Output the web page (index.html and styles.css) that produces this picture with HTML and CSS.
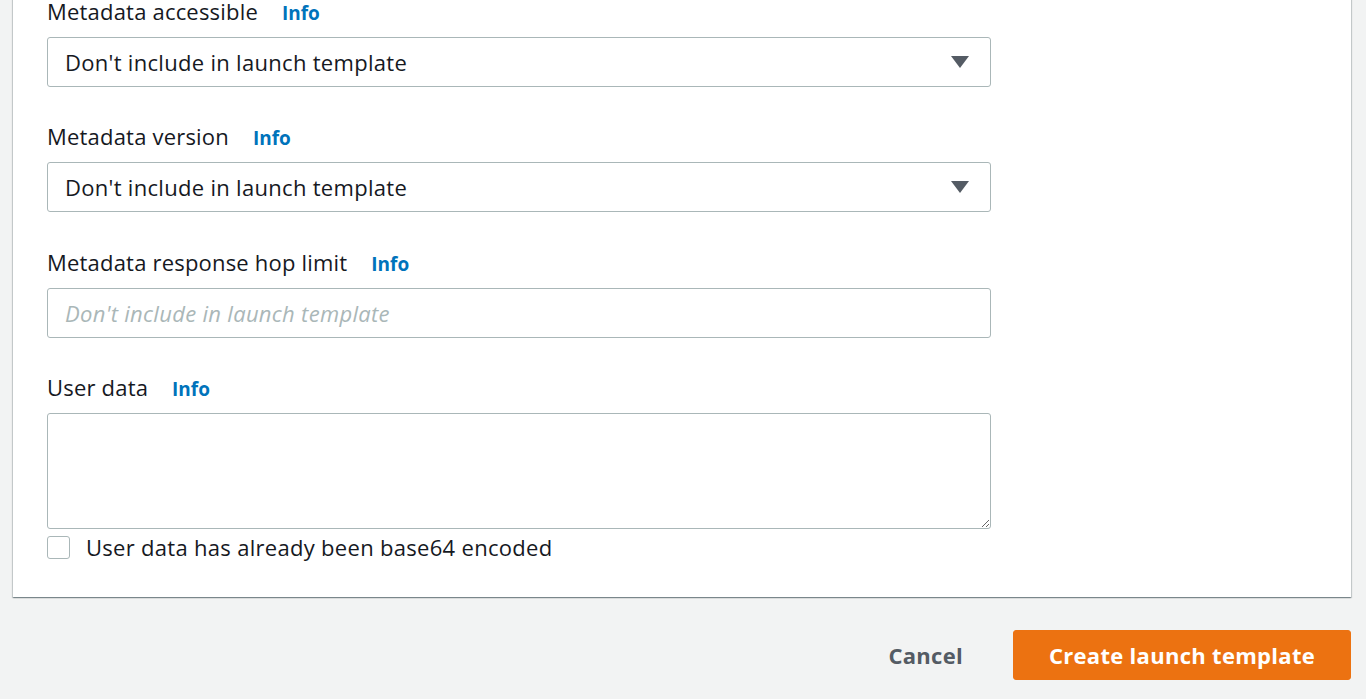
FILE: index.html
```html
<!DOCTYPE html>
<html lang="en">
<head>
<meta charset="utf-8">
<title>Create launch template</title>
<link rel="stylesheet" href="styles.css">
</head>
<body>
<div class="page">
  <section class="panel">
    <div class="field">
      <div class="label">Metadata accessible <a class="info" href="#">Info</a></div>
      <div class="select"><span class="value">Don't include in launch template</span><span class="caret"></span></div>
    </div>
    <div class="field">
      <div class="label">Metadata version <a class="info" href="#">Info</a></div>
      <div class="select"><span class="value">Don't include in launch template</span><span class="caret"></span></div>
    </div>
    <div class="field field-gap">
      <div class="label">Metadata response hop limit <a class="info" href="#">Info</a></div>
      <input class="input" type="text" placeholder="Don't include in launch template">
    </div>
    <div class="field field-last">
      <div class="label">User data <a class="info" href="#">Info</a></div>
      <textarea class="textarea"></textarea>
      <label class="check"><span class="box"></span><span>User data has already been base64 encoded</span></label>
    </div>
  </section>
  <div class="actions">
    <a class="cancel" href="#">Cancel</a>
    <button class="primary" type="button">Create launch template</button>
  </div>
</div>
</body>
</html>
```

FILE: styles.css
```css
html, body {
  margin: 0;
  padding: 0;
  background: #f2f3f3;
  font-family: "Open Sans", Lato, sans-serif;
  color: #16191f;
  overflow: hidden;
}
.page {
  padding: 0 15px 0 13px;
}
.panel {
  background: #fff;
  margin-top: -20px;
  padding: 17px 34px 38px 34px;
  box-shadow: 0 1px 1px 0 rgba(0, 28, 36, 0.3), 1px 1px 1px 0 rgba(0, 28, 36, 0.15), -1px 1px 1px 0 rgba(0, 28, 36, 0.15);
}
.field {
  width: 944px;
  margin-bottom: 35px;
}
.field-gap {
  margin-top: 36px;
}
.field-last {
  margin-bottom: 0;
}
.label {
  font-size: 22px;
  letter-spacing: 0.2px;
  line-height: 26px;
  height: 26px;
  padding-top: 1px;
  margin-bottom: 13px;
  white-space: nowrap;
}
.info {
  font-weight: 700;
  font-size: 19px;
  line-height: 1;
  letter-spacing: 0;
  color: #0073bb;
  text-decoration: none;
  margin-left: 18px;
}
.select {
  box-sizing: border-box;
  height: 50px;
  border: 1.5px solid #aab7b8;
  border-radius: 3px;
  display: flex;
  align-items: center;
  justify-content: space-between;
  padding: 0 21px 0 17px;
  font-size: 22px;
  letter-spacing: 0.3px;
}
.caret {
  width: 0;
  height: 0;
  border-left: 9px solid transparent;
  border-right: 9px solid transparent;
  border-top: 12px solid #545b64;
}
.input {
  box-sizing: border-box;
  display: block;
  width: 100%;
  height: 50px;
  margin: 0;
  border: 1.5px solid #aab7b8;
  border-radius: 3px;
  padding: 0 17px;
  font-family: inherit;
  font-size: 22px;
  letter-spacing: 0.3px;
  outline: none;
}
.input::placeholder {
  color: #aab7b8;
  font-style: italic;
}
.textarea {
  box-sizing: border-box;
  display: block;
  width: 100%;
  height: 116px;
  border: 1.5px solid #aab7b8;
  border-radius: 3px;
  resize: vertical;
  font-family: inherit;
  font-size: 22px;
  margin: 0;
}
.check {
  display: flex;
  align-items: center;
  gap: 16px;
  margin-top: 6px;
  font-size: 22px;
  letter-spacing: 0.3px;
  line-height: 24px;
}
.box {
  box-sizing: border-box;
  width: 23px;
  height: 23px;
  border: 1.5px solid #aab7b8;
  border-radius: 3px;
  background: #fff;
}
.actions {
  display: flex;
  justify-content: flex-end;
  align-items: center;
  gap: 50px;
  padding-top: 33px;
}
.cancel {
  font-weight: 700;
  font-size: 22px;
  letter-spacing: 0.3px;
  color: #545b64;
  text-decoration: none;
}
.primary {
  box-sizing: border-box;
  width: 338px;
  height: 50px;
  background: #ec7211;
  border: 1px solid #ec7211;
  border-radius: 3px;
  color: #fff;
  font-family: inherit;
  font-weight: 700;
  font-size: 22px;
  letter-spacing: 0.3px;
}
```
